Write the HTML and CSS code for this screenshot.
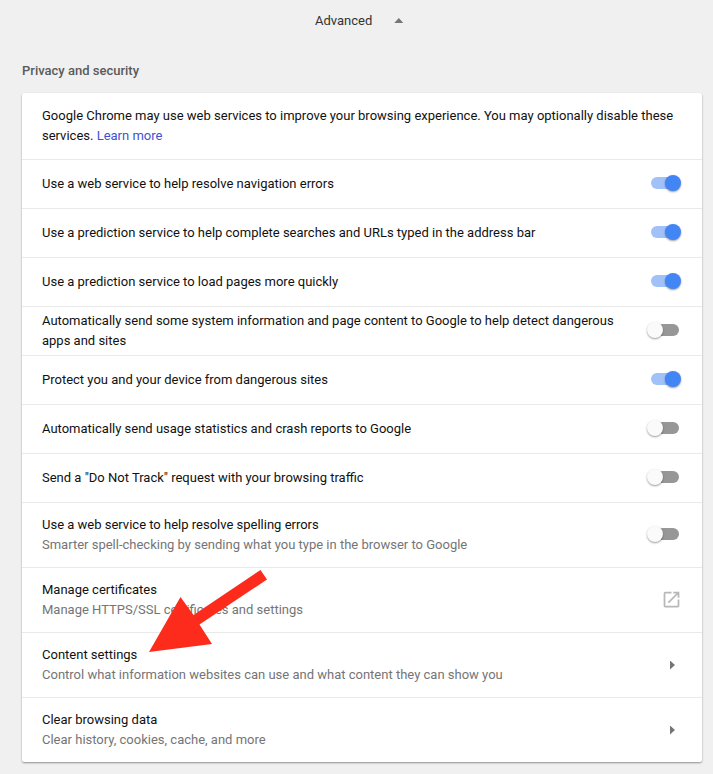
FILE: index.html
```html
<!DOCTYPE html>
<html lang="en">
<head>
<meta charset="utf-8">
<title>Settings</title>
<link rel="stylesheet" href="styles.css">
</head>
<body>
<header class="advanced"><span>Advanced</span><i class="up"></i></header>
<main>
<h2>Privacy and security</h2>
<section class="card">
<div class="row intro"><p>Google Chrome may use web services to improve your browsing experience. You may optionally disable these<br>services. <a>Learn more</a></p></div>
<div class="row"><p>Use a web service to help resolve navigation errors</p><span class="toggle on"></span></div>
<div class="row"><p>Use a prediction service to help complete searches and URLs typed in the address bar</p><span class="toggle on"></span></div>
<div class="row"><p>Use a prediction service to load pages more quickly</p><span class="toggle on"></span></div>
<div class="row"><p>Automatically send some system information and page content to Google to help detect dangerous<br>apps and sites</p><span class="toggle"></span></div>
<div class="row"><p>Protect you and your device from dangerous sites</p><span class="toggle on"></span></div>
<div class="row"><p>Automatically send usage statistics and crash reports to Google</p><span class="toggle"></span></div>
<div class="row"><p>Send a "Do Not Track" request with your browsing traffic</p><span class="toggle"></span></div>
<div class="row two"><p>Use a web service to help resolve spelling errors<br><small>Smarter spell-checking by sending what you type in the browser to Google</small></p><span class="toggle"></span></div>
<div class="row two"><p>Manage certificates<br><small>Manage HTTPS/SSL certificates and settings</small></p><svg class="open" viewBox="0 0 24 24"><path d="M19 19H5V5h7V3H5a2 2 0 0 0-2 2v14a2 2 0 0 0 2 2h14c1.100 0 2-.9 2-2v-7h-2v7zM14 3v2h3.590l-9.830 9.830 1.410 1.410L19 6.410V10h2V3h-7z"/></svg></div>
<div class="row two"><p>Content settings<br><small>Control what information websites can use and what content they can show you</small></p><i class="right"></i></div>
<div class="row two"><p>Clear browsing data<br><small>Clear history, cookies, cache, and more</small></p><i class="right"></i></div>
</section>
</main>
<svg class="arrow" viewBox="0 0 120 84"><path d="M112.500 0L119 9.500L51.500 54.500L64 74L1 82L32.500 27L45.500 45Z"/></svg>
</body>
</html>
```

FILE: styles.css
```css
* { box-sizing: border-box; }
body { position: relative; margin: 0; height: 774px; overflow: hidden; background: #f0f0f0; color: #111; font: 13px/20px Roboto, sans-serif; }
p { margin: 0; white-space: nowrap; }
.advanced { height: 41px; padding-left: 315px; display: flex; align-items: center; gap: 22px; color: #333; }
.up { width: 9px; height: 5px; background: #757575; clip-path: polygon(50% 0, 100% 100%, 0 100%); }
main { padding: 0 11px 0 22px; }
h2 { margin: 0; height: 52px; padding-top: 20px; font-size: 13px; line-height: 20px; font-weight: 500; color: #5a5a5a; }
.card { height: 669px; background: #fff; border-radius: 2px; box-shadow: 0 1px 2px rgba(0,0,0,.4); }
.row { height: 49px; padding: 0 20px; display: flex; align-items: center; justify-content: space-between; border-top: 1px solid #e9e9e9; }
.row.intro { height: 66px; border: 0; }
.row.two { height: 65px; }
a { color: #3f51d5; }
small { font-size: 13px; color: #757575; }
.toggle { position: relative; width: 28px; height: 12px; margin: 0 3px 2px 0; border-radius: 6px; background: #979797; }
.toggle::after { content: ""; position: absolute; left: -4px; top: -2px; width: 16px; height: 16px; border-radius: 50%; background: #fafafa; box-shadow: 0 1px 2px rgba(0,0,0,.4); }
.toggle.on { background: #a0c2f9; }
.toggle.on::after { left: 14px; background: #4285f4; }
.open { width: 21px; height: 21px; margin: 0 0 1px; fill: #b8b8b8; }
.right { width: 5px; height: 9px; margin-right: 7px; background: #757575; clip-path: polygon(0 0, 100% 50%, 0 100%); }
.arrow { position: absolute; left: 148px; top: 570px; width: 120px; height: 84px; fill: #fc2b1c; }
```
